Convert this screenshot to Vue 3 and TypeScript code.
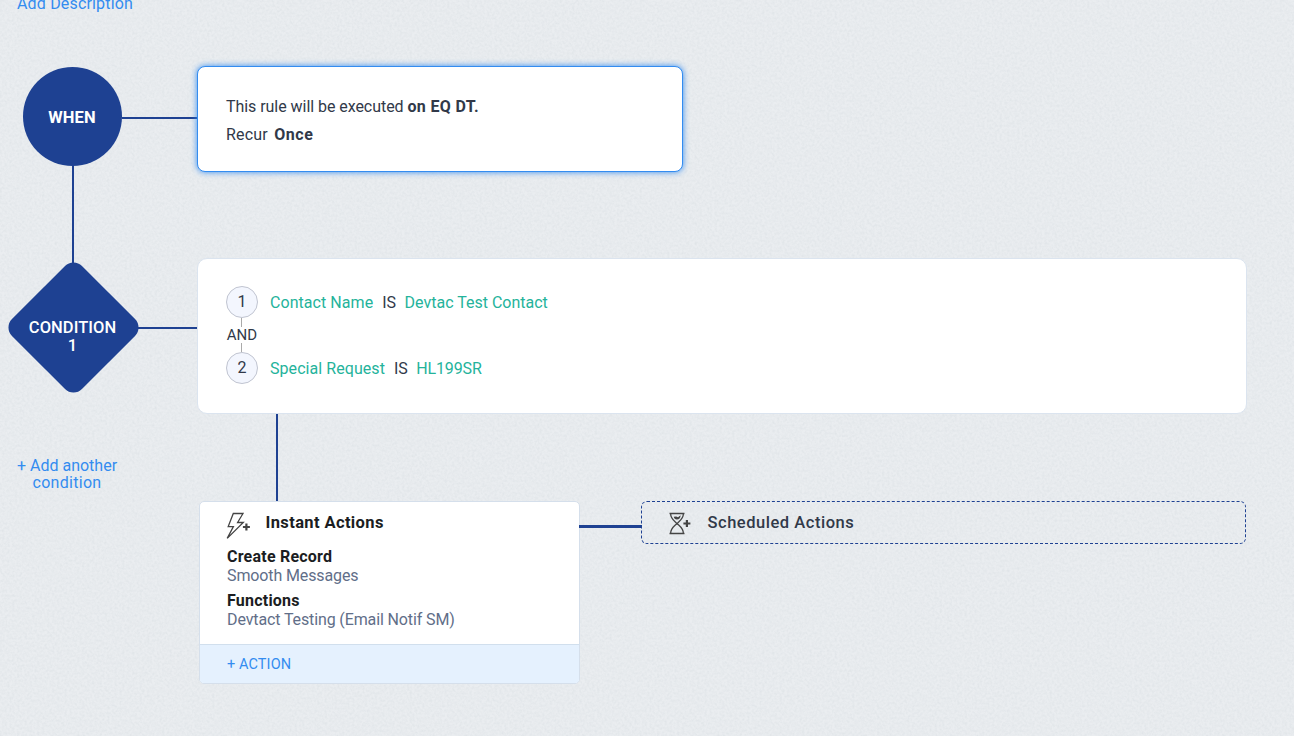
<script setup lang="ts">
interface Criterion { index: number; field: string; value: string; cls: string }
interface ActionGroup { title: string; item: string; cls: string }

const criteria: Criterion[] = [
  { index: 1, field: 'Contact Name', value: 'Devtac Test Contact', cls: 'c-contact' },
  { index: 2, field: 'Special Request', value: 'HL199SR', cls: 'c-request' },
]
const groups: ActionGroup[] = [
  { title: 'Create Record', item: 'Smooth Messages', cls: 'g-record' },
  { title: 'Functions', item: 'Devtact Testing (Email Notif SM)', cls: 'g-func' },
]
</script>

<template>
  <main class="canvas">
    <svg class="texture" aria-hidden="true">
      <filter id="paper" x="0" y="0" width="100%" height="100%">
        <feTurbulence type="fractalNoise" baseFrequency="0.4" numOctaves="2" seed="8" />
        <feColorMatrix values="0 0 0 0 0.35  0 0 0 0 0.42  0 0 0 0 0.46  1 1 0 0 -0.75" />
      </filter>
      <rect width="100%" height="100%" filter="url(#paper)" />
    </svg>

    <a class="describe">Add Description</a>

    <section class="row when-row">
      <div class="node-col">
        <div class="when">WHEN</div>
      </div>
      <div class="card rule">
        <p>This rule will be executed <b class="event">on EQ DT.</b></p>
        <p class="recur">Recur <b class="once">Once</b></p>
      </div>
    </section>

    <section class="row cond-row">
      <div class="node-col">
        <div class="diamond"><div class="diamond-label"><span>CONDITION</span><span>1</span></div></div>
      </div>
      <div class="card criteria">
        <template v-for="c in criteria" :key="c.index">
          <div v-if="c.index > 1" class="joiner">AND</div>
          <div class="criterion" :class="c.cls">
            <span class="num">{{ c.index }}</span>
            <span class="field">{{ c.field }}</span>
            <span class="op">IS</span>
            <span class="value">{{ c.value }}</span>
          </div>
        </template>
      </div>
    </section>

    <section class="row act-row">
      <a class="add-cond"><span>+ Add another</span><span class="second">condition</span></a>
      <div class="instant">
        <header>
          <svg class="bolt" viewBox="0 0 26 28" width="26" height="28">
            <path d="M7.3 1.5H17L11.6 10.5H17.3L1.2 26.4L7.4 14.6H2.2Z" />
            <path class="plus" d="M20.4 11.5V18.5M16.9 15H23.9" />
          </svg>
          <h2>Instant Actions</h2>
        </header>
        <div v-for="g in groups" :key="g.title" class="group" :class="g.cls">
          <h3>{{ g.title }}</h3>
          <p>{{ g.item }}</p>
        </div>
        <footer>+ ACTION</footer>
      </div>
      <div class="scheduled">
        <svg class="glass" viewBox="0 0 24 24" width="24" height="24">
          <path d="M.5 1.5H15.5M.5 21.5H15.5M1.6 1.5C1.6 7 5.6 9 8 11.5C10.4 14 14.4 16 14.4 21.5M14.4 1.5C14.4 7 10.4 9 8 11.5C5.6 14 1.6 16 1.6 21.5" />
          <path class="sand" d="M4.8 4.8L7.2 4.6L9 5.2L11.6 3.2C11.6 6 10 7.4 8 7.4C6 7.4 5.2 6.6 4.8 4.8Z" />
          <path class="plus" d="M17.9 8V15M14.4 11.5H21.4" />
        </svg>
        <span>Scheduled Actions</span>
      </div>
    </section>
  </main>
</template>

<style>
html, body { margin: 0; overflow: hidden; }
</style>

<style scoped>
.canvas { position: relative; width: 1294px; height: 736px; overflow: hidden; background: #eaedf0; box-sizing: border-box; font-family: Roboto, "Liberation Sans", sans-serif; font-size: 16px; color: #313949; }
.texture { position: absolute; inset: 0; width: 100%; height: 100%; opacity: .15; }
p, h2, h3 { margin: 0; font-size: 16px; font-weight: 400; }
b { font-weight: 700; }
.describe { position: relative; display: block; height: 66px; padding-left: 17px; box-sizing: border-box; line-height: 8px; color: #338cf0; letter-spacing: .17px; }
.row { position: relative; display: flex; align-items: flex-start; }
.node-col { width: 197px; flex: none; position: relative; }
.card { position: relative; box-sizing: border-box; background: #fff; border-radius: 10px; }
.when-row { height: 192px; }
.when { position: relative; width: 99px; height: 99px; margin: 1px 0 0 23px; border-radius: 50%; background: #1e4192; color: #fff; font-size: 16.5px; font-weight: 700; display: flex; align-items: center; justify-content: center; letter-spacing: .1px; line-height: 18px; padding: 2px 1px 0 0; box-sizing: border-box; }
.when::before { content: ""; position: absolute; left: 99px; top: 50px; width: 75px; height: 2px; background: #1e4192; }
.when::after { content: ""; position: absolute; left: 49px; top: 98px; width: 2px; height: 100px; background: #1e4192; }
.rule { width: 486px; height: 106px; padding: 26px 28px; border: 1px solid #338cf0; border-radius: 8px; box-shadow: 0 0 6px #338cf0; line-height: 28px; letter-spacing: -.05px; }
.event { letter-spacing: .33px; }
.recur { letter-spacing: .2px; }
.once { margin-left: 2px; letter-spacing: .6px; }
.cond-row { height: 243px; }
.diamond { position: relative; width: 99px; height: 99px; margin: 20px 0 0 24px; }
.diamond::before { content: ""; position: absolute; inset: 0; border-radius: 12px; background: #1e4192; transform: rotate(45deg); }
.diamond::after { content: ""; position: absolute; left: 110px; top: 49px; width: 63px; height: 2px; background: #1e4192; }
.diamond-label { position: relative; width: 97px; padding-top: 41px; display: flex; flex-direction: column; align-items: center; line-height: 18px; color: #fff; font-size: 16.5px; font-weight: 500; letter-spacing: .05px; }
.criteria { width: 1050px; height: 156px; padding: 27px 28px; border: 1px solid #dbe4ef; }
.criteria::after { content: ""; position: absolute; left: 78px; top: 155px; width: 2px; height: 87px; background: #1e4192; }
.criterion { display: flex; align-items: center; height: 32px; }
.num { width: 32px; height: 32px; box-sizing: border-box; border: 1px solid #c0c4d0; border-radius: 50%; background: #f3f6fe; text-align: center; line-height: 29px; margin-right: 12px; }
.field, .value { color: #24b39b; letter-spacing: .06px; }
.value { letter-spacing: 0; }
.c-request .value { letter-spacing: -.15px; }
.op { margin: 0 8.5px 0 9px; }
.joiner { position: relative; width: 32px; height: 34px; line-height: 34px; text-align: center; font-size: 15px; }
.joiner::before, .joiner::after { content: ""; position: absolute; left: 15px; width: 1px; height: 9px; background: #aaa; }
.joiner::before { top: 0; }
.joiner::after { bottom: 0; }
.add-cond { width: 134px; margin-top: -44px; height: 40px; display: flex; flex-direction: column; align-items: center; line-height: 17px; color: #338cf0; }
.add-cond .second { letter-spacing: .3px; }
.instant { position: relative; box-sizing: border-box; width: 381px; height: 183px; margin-left: 65px; background: #fff; border: 1px solid #d5dfeb; border-radius: 5px; overflow: hidden; }
.instant header { display: flex; height: 44px; padding-left: 26px; }
.bolt { margin-top: 10px; }
.bolt path, .glass path { fill: none; stroke: #444; stroke-width: 1.3; }
.instant header h2 { margin-left: 13.5px; font-size: 16.5px; font-weight: 700; color: #1b1d22; line-height: 41px; letter-spacing: .38px; }
.group { padding-left: 27px; height: 44px; }
.group h3 { font-weight: 700; color: #1b1d22; line-height: 22px; height: 20px; letter-spacing: .22px; }
.group p { color: #616e88; line-height: 20px; letter-spacing: -.12px; }
.instant footer { position: absolute; left: 0; right: 0; bottom: 0; height: 38px; border-top: 1px solid #d1dfed; background: #e5f1fe; padding-left: 27px; line-height: 39px; font-size: 14.5px; color: #338cf0; letter-spacing: .1px; }
.scheduled { position: relative; box-sizing: border-box; width: 605px; height: 43px; margin-left: 61px; border: 1px dashed #1e4192; border-radius: 6px; display: flex; align-items: center; padding-left: 27px; font-size: 16.5px; font-weight: 500; letter-spacing: .53px; }
.scheduled::before { content: ""; position: absolute; left: -63px; top: 23px; width: 63px; height: 3px; background: #1e4192; }
.glass { margin: 2px 14.5px 0 0; }
.bolt .plus, .glass .plus { stroke-width: 2.2; }
.glass .sand { fill: #444; stroke: none; }
</style>
